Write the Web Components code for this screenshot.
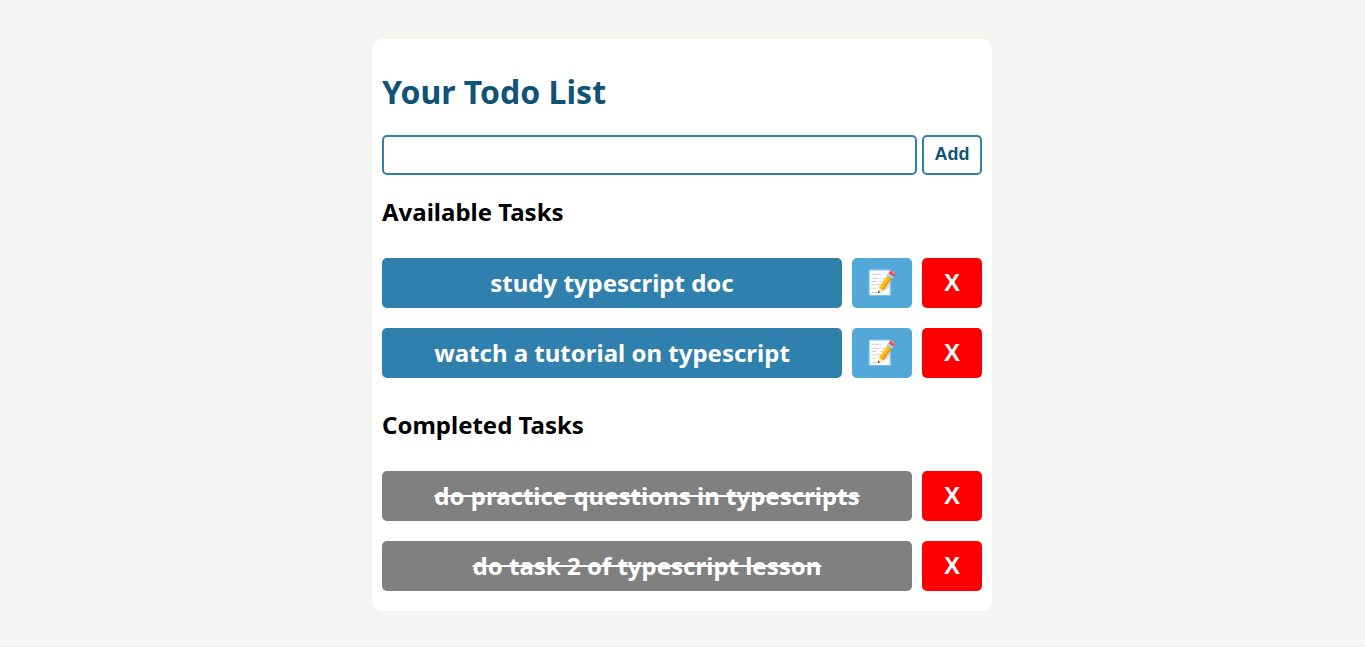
<!DOCTYPE html>
<html lang="en">
<head>
<meta charset="utf-8">
<title>Todo List</title>
<style>
html { background: #f4f4f2; }
body { margin: 0; font-family: "Noto Sans", "Liberation Sans", sans-serif; }
</style>
</head>
<body>
<todo-app>
  <todo-form></todo-form>
  <todo-section heading="Available Tasks">
    <todo-item>study typescript doc</todo-item>
    <todo-item>watch a tutorial on typescript</todo-item>
  </todo-section>
  <todo-section heading="Completed Tasks">
    <todo-item done>do practice questions in typescripts</todo-item>
    <todo-item done>do task 2 of typescript lesson</todo-item>
  </todo-section>
</todo-app>
<script>
class TodoApp extends HTMLElement {
  constructor() {
    super();
    this.attachShadow({ mode: "open" }).innerHTML = `
      <style>
        :host { display: block; padding: 39px 21px 35px 20px; border-bottom: 1px solid #efefee; }
        main { box-sizing: border-box; max-width: 620px; margin: 0 auto; padding: 30px 10px 20px; background: #fff; border-radius: 10px; }
        h1 { margin: 0 0 20px; font-size: 32px; line-height: 46px; color: #0f5377; }
      </style>
      <main><h1>Your Todo List</h1><slot></slot></main>`;
  }
}
class TodoForm extends HTMLElement {
  constructor() {
    super();
    this.attachShadow({ mode: "open" }).innerHTML = `
      <style>
        :host { display: block; }
        form { display: flex; gap: 5px; }
        input, button { box-sizing: border-box; height: 40px; margin: 0; border: 2px solid #2f80ad; border-radius: 5px; background: #fff; font: 18px "Liberation Sans", sans-serif; }
        input { flex: 1; min-width: 0; padding: 0 10px; }
        button { width: 60px; padding: 0 0 2px; font-weight: bold; color: #0f5377; cursor: pointer; }
      </style>
      <form><input type="text" aria-label="New task"><button type="button">Add</button></form>`;
  }
}
class TodoSection extends HTMLElement {
  constructor() {
    super();
    this.attachShadow({ mode: "open" }).innerHTML = `
      <style>
        :host { display: block; margin-top: 20px; }
        :host(:last-of-type) { margin-top: 30px; }
        h2 { margin: 0 0 30px; font-size: 24px; line-height: 33px; color: #000; }
        div { display: grid; gap: 20px; }
      </style>
      <section><h2></h2><div><slot></slot></div></section>`;
    this.shadowRoot.querySelector("h2").textContent = this.getAttribute("heading");
  }
}
class TodoItem extends HTMLElement {
  constructor() {
    super();
    const done = this.hasAttribute("done");
    this.attachShadow({ mode: "open" }).innerHTML = `
      <style>
        :host { display: flex; gap: 10px; color: #fff; }
        .task { flex: 1; min-width: 0; border-radius: 5px; background: #2f80ad; text-align: center; font-size: 24px; font-weight: bold; line-height: 50px; }
        :host([done]) .task { background: #808080; text-decoration: line-through; }
        button { box-sizing: border-box; width: 60px; height: 50px; margin: 0; padding: 0; border: 0; border-radius: 5px; color: #fff; font: bold 24px "Liberation Sans", sans-serif; cursor: pointer; }
        .edit { background: #52a9d7; }
        .remove { background: #f00; }
      </style>
      <div class="task"><slot></slot></div>
      ${done ? "" : `<button class="edit" type="button" aria-label="Edit">📝</button>`}
      <button class="remove" type="button">X</button>`;
  }
}
customElements.define("todo-app", TodoApp);
customElements.define("todo-form", TodoForm);
customElements.define("todo-section", TodoSection);
customElements.define("todo-item", TodoItem);
</script>
</body>
</html>
